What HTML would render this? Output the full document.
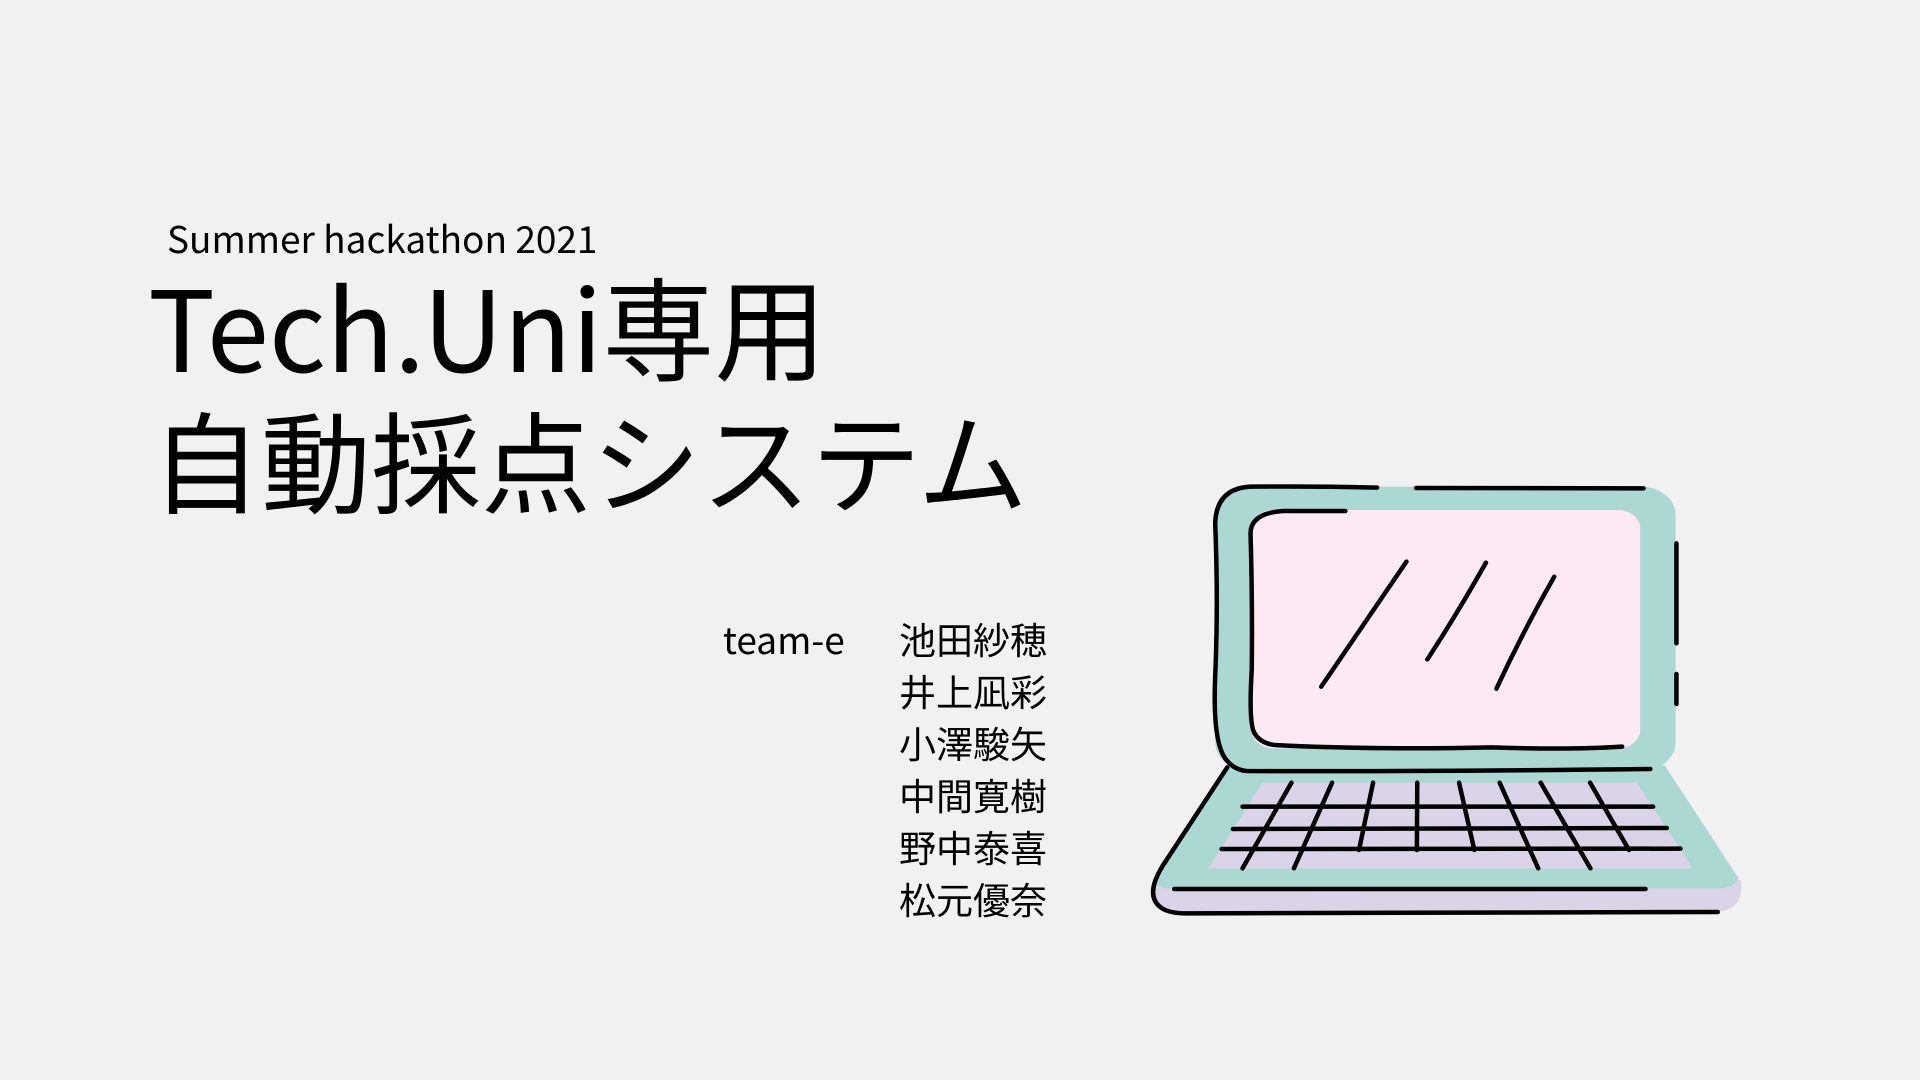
<!DOCTYPE html>
<html><head><meta charset="utf-8"><style>
html,body{margin:0;padding:0;width:1920px;height:1080px;background:#f1f1f1;overflow:hidden}
body{position:relative;font-family:"Noto Sans CJK JP","Liberation Sans",sans-serif;color:#000}
.t{position:absolute;white-space:nowrap;line-height:1}
</style></head><body>
<div class="t" style="left:167px;top:219px;font-size:37px;letter-spacing:0px">Summer hackathon 2021</div>
<div class="t" style="left:148px;top:268px;font-size:112px">Tech.Uni専用</div>
<div class="t" style="left:151px;top:402px;font-size:110px">自動採点システム</div>
<div class="t" style="left:723px;top:612px;font-size:37px;line-height:52px">team-e</div>
<div class="t" style="left:899px;top:612px;font-size:37px;line-height:52px">池田紗穂<br>井上凪彩<br>小澤駿矢<br>中間寛樹<br>野中泰喜<br>松元優奈</div>
<svg style="position:absolute;left:1130px;top:470px" width="630" height="460" viewBox="0 0 1568 1380" preserveAspectRatio="none">
<g>
<path d="M60 1230 L1520 1230 Q1530 1320 1460 1325 L110 1330 Q50 1320 55 1260 Z" fill="#dbd3e8"/>
<path d="M245 885 L1330 885 L1515 1225 Q1500 1255 1465 1255 L90 1255 Q55 1250 65 1215 Z" fill="#abd8d2"/>
<rect x="212" y="50" width="1146" height="852" rx="85" fill="#abd8d2"/>
<rect x="302" y="120" width="968" height="715" rx="55" fill="#fce9f3"/>
<path d="M330 938 L1262 938 L1400 1195 L195 1195 Z" fill="#dbd3e8"/>
</g>
<g fill="none" stroke="#000" stroke-width="4.5" vector-effect="non-scaling-stroke" stroke-linecap="round" stroke-linejoin="round">
<path vector-effect="non-scaling-stroke" d="M615 53 Q450 48 300 50 Q215 55 212 160 Q220 400 212 620 Q205 820 240 870 Q260 900 290 903 Q700 905 1295 897"/>
<path vector-effect="non-scaling-stroke" d="M712 54 L1278 55"/>
<path vector-effect="non-scaling-stroke" d="M536 123 L380 123 Q300 130 300 190 Q305 400 303 600 Q295 760 310 790 Q325 820 360 825 Q600 840 900 832 Q1100 840 1225 830"/>
<path vector-effect="non-scaling-stroke" d="M1360 220 L1360 520 M1360 612 L1360 702"/>
<path vector-effect="non-scaling-stroke" d="M688 275 L476 650 M886 278 Q810 440 740 568 M1056 320 Q980 480 912 656"/>
<path vector-effect="non-scaling-stroke" d="M242 892 L80 1190 Q35 1280 80 1315 Q100 1330 140 1330 L1463 1326"/>
<path vector-effect="non-scaling-stroke" d="M110 1257 L1283 1257"/>
<path vector-effect="non-scaling-stroke" d="M280 1010 L1302 1010 M256 1077 L1336 1074 M228 1137 L1370 1136"/>
<path vector-effect="non-scaling-stroke" d="M402 938 L280 1195 M503 938 L408 1195 M605 938 L570 1140 M715 938 L714 1140 M819 938 L857 1140 M920 938 L1016 1195 M1022 938 L1146 1195 M1145 938 L1242 1140"/>
</g>
</svg>
</body></html>
